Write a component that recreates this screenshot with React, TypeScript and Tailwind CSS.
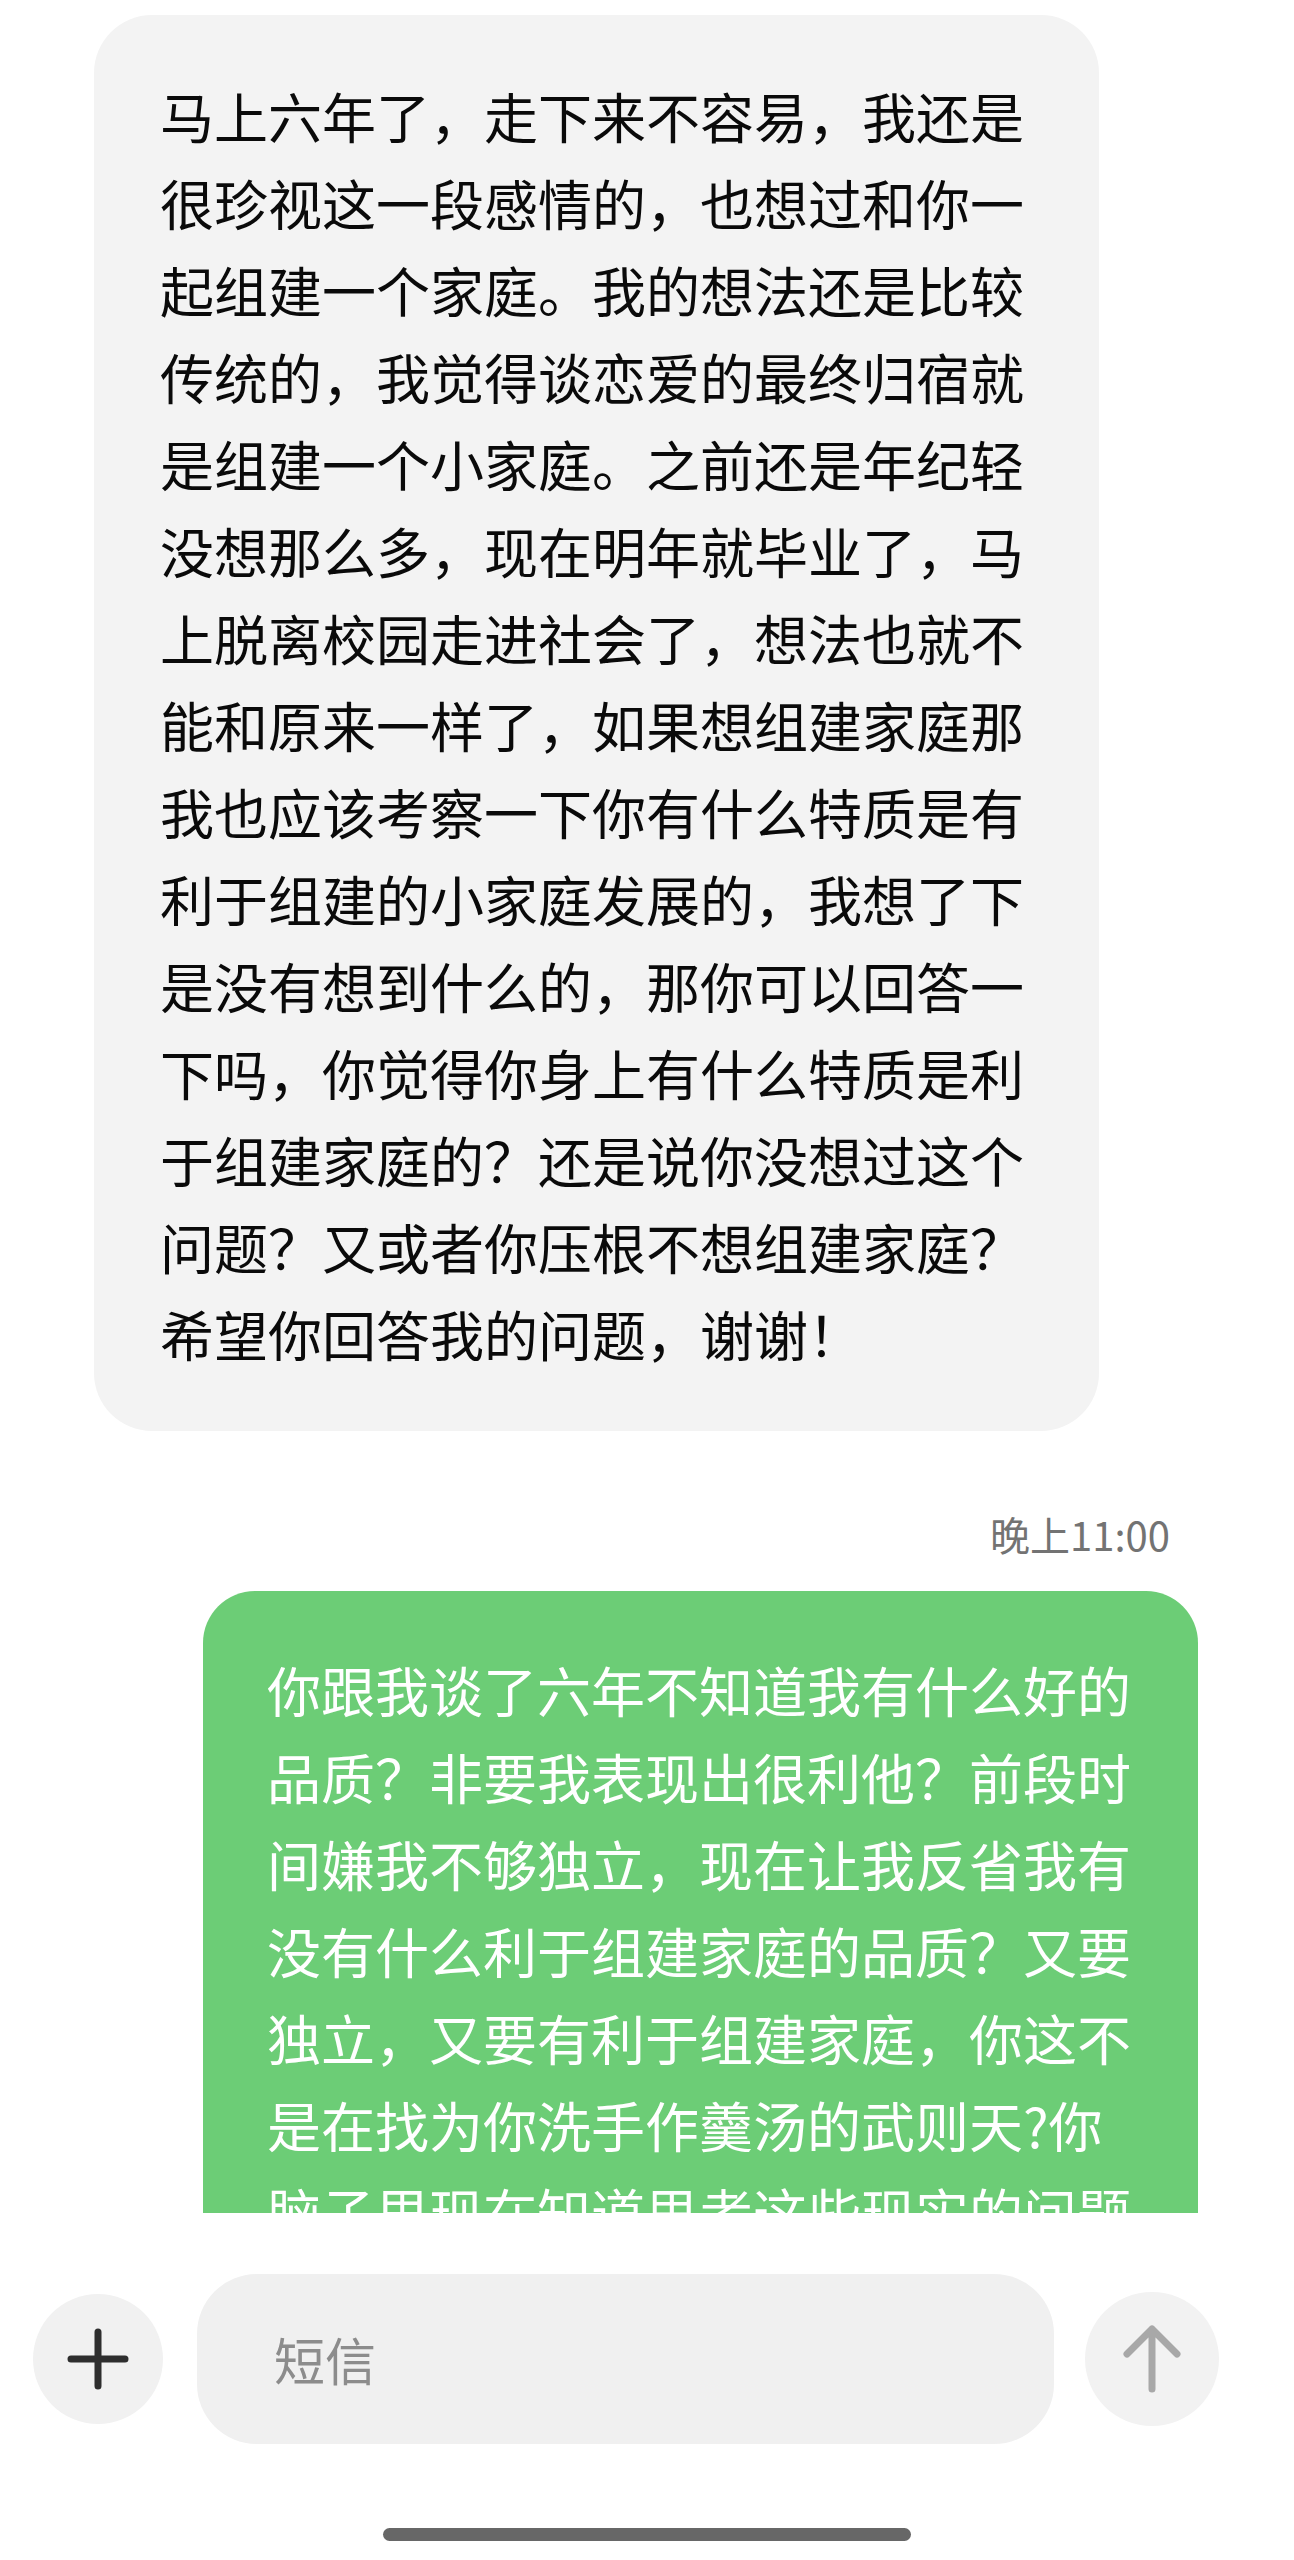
const received = [
  "马上六年了，走下来不容易，我还是",
  "很珍视这一段感情的，也想过和你一",
  "起组建一个家庭。我的想法还是比较",
  "传统的，我觉得谈恋爱的最终归宿就",
  "是组建一个小家庭。之前还是年纪轻",
  "没想那么多，现在明年就毕业了，马",
  "上脱离校园走进社会了，想法也就不",
  "能和原来一样了，如果想组建家庭那",
  "我也应该考察一下你有什么特质是有",
  "利于组建的小家庭发展的，我想了下",
  "是没有想到什么的，那你可以回答一",
  "下吗，你觉得你身上有什么特质是利",
  "于组建家庭的？还是说你没想过这个",
  "问题？又或者你压根不想组建家庭？",
  "希望你回答我的问题，谢谢！",
];

const sent = [
  "你跟我谈了六年不知道我有什么好的",
  "品质？非要我表现出很利他？前段时",
  "间嫌我不够独立，现在让我反省我有",
  "没有什么利于组建家庭的品质？又要",
  "独立，又要有利于组建家庭，你这不",
  "是在找为你洗手作羹汤的武则天?你",
  "脑子里现在知道思考这些现实的问题",
];

export default function App() {
  return (
    <div className="w-[1294px] h-[2560px] bg-white flex flex-col overflow-hidden font-['Noto_Sans_CJK_SC','Noto_Sans',sans-serif]">
      {/* 聊天内容 */}
      <div className="h-[2213px] overflow-hidden flex flex-col">
        <div className="mt-[15px] ml-[94px] w-[1005px] rounded-[58px] bg-[#f3f3f3] pl-[66px] pt-[57px] pb-[54px] text-[54px] leading-[87px] text-[#0a0a0a]">
          {received.map((line) => (
            <div key={line} className="whitespace-nowrap">
              {line}
            </div>
          ))}
        </div>

        <div className="mt-[79px] mr-[124px] text-right text-[40px] leading-[48px] text-[#737373]">
          晚上11:00
        </div>

        <div className="mt-[33px] ml-[203px] w-[995px] rounded-[52px] bg-[#6ccd76] pl-[64px] pt-[55px] pb-[55px] text-[54px] leading-[87px] text-white">
          {sent.map((line) => (
            <div key={line} className="whitespace-nowrap">
              {line}
            </div>
          ))}
        </div>
      </div>

      {/* 输入栏 */}
      <div className="flex-1 flex flex-col">
        <div className="mt-[61px] flex items-center">
          <div className="ml-[33px] w-[130px] h-[130px] rounded-full bg-[#f1f1f1] flex items-center justify-center">
            <svg width="62" height="62" viewBox="0 0 62 62" fill="none">
              <path d="M4 31H58M31 4V58" stroke="#2e2e2e" strokeWidth="7" strokeLinecap="round" />
            </svg>
          </div>
          <div className="ml-[34px] w-[857px] h-[170px] rounded-[60px] bg-[#f0f0f0] flex items-center pl-[77px] text-[51px] text-[#8c8c8c]">
            短信
          </div>
          <div className="ml-[31px] w-[134px] h-[134px] rounded-full bg-[#f2f2f2] flex items-center justify-center">
            <svg width="60" height="70" viewBox="0 0 60 70" fill="none">
              <path d="M30 5V65M5 30L30 5L55 30" stroke="#a8a8a8" strokeWidth="7" strokeLinecap="round" strokeLinejoin="round" />
            </svg>
          </div>
        </div>
        <div className="mt-auto mb-[19px] mx-auto w-[528px] h-[13px] rounded-full bg-[#676767]" />
      </div>
    </div>
  );
}
